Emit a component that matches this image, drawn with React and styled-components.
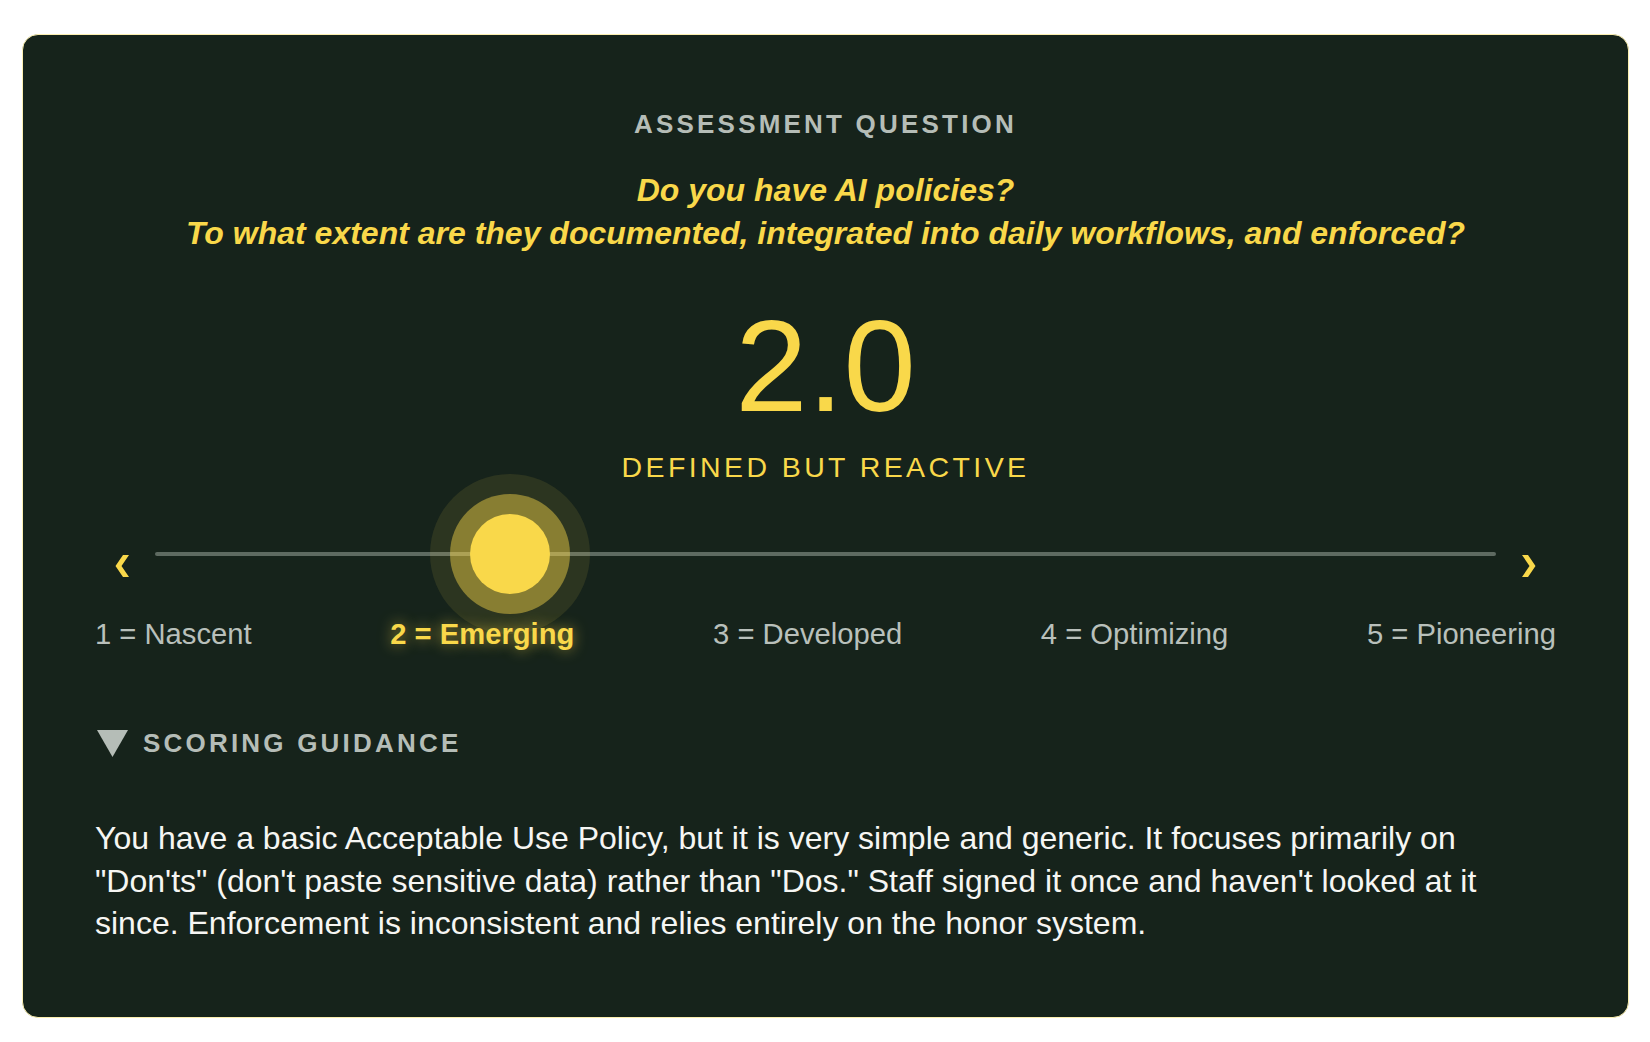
import React, { useState } from 'react';
import styled, { createGlobalStyle } from 'styled-components';

const GlobalStyle = createGlobalStyle`
  html, body {
    margin: 0;
    padding: 0;
    background: #ffffff;
  }
  body {
    font-family: "Liberation Sans", Arial, Helvetica, sans-serif;
  }
`;

const YELLOW = '#f9d84a';

const Page = styled.div`
  padding: 34px 21px 25px 22px;
`;

const Card = styled.section`
  background-color: #16231b;
  border: 1px solid #fbefb0;
  border-radius: 16px;
  padding: 73px 72px 72px 72px;
  display: flex;
  flex-direction: column;
`;

const Eyebrow = styled.h3`
  margin: 0;
  font-size: 26px;
  line-height: 32px;
  font-weight: 700;
  letter-spacing: 3.2px;
  text-transform: uppercase;
  color: #b5bdb7;
  text-align: center;
`;

const Question = styled.p`
  margin: 29px 0 0;
  font-size: 32px;
  line-height: 43px;
  font-weight: 700;
  font-style: italic;
  color: ${YELLOW};
  text-align: center;
`;

const Score = styled.div`
  margin-top: 46px;
  font-size: 130px;
  line-height: 130px;
  color: ${YELLOW};
  text-align: center;
`;

const Level = styled.div`
  margin-top: 19px;
  font-size: 28.5px;
  line-height: 34px;
  letter-spacing: 3.4px;
  text-transform: uppercase;
  color: ${YELLOW};
  text-align: center;
`;

const SliderRow = styled.div`
  margin-top: 30px;
  height: 80px;
  display: flex;
  align-items: center;
  gap: 6px;
`;

const ArrowButton = styled.button`
  width: 54px;
  height: 80px;
  padding: 24px 0 0;
  border: none;
  background: none;
  color: ${YELLOW};
  display: flex;
  align-items: center;
  justify-content: center;
  cursor: pointer;
`;

const Track = styled.div`
  flex: 1;
  position: relative;
  height: 4px;
  border-radius: 2px;
  background-color: #5e6a61;
`;

const Thumb = styled.div`
  position: absolute;
  top: 50%;
  width: 80px;
  height: 80px;
  border-radius: 50%;
  background-color: ${YELLOW};
  transform: translate(-50%, -50%);
  box-shadow:
    0 0 0 20px rgba(249, 216, 74, 0.45),
    0 0 0 40px rgba(249, 216, 74, 0.1);
`;

const Labels = styled.div`
  margin-top: 23px;
  display: flex;
  justify-content: space-between;
`;

const Label = styled.span`
  font-size: 29.2px;
  line-height: 35px;
  font-weight: ${({ $active }) => ($active ? 700 : 400)};
  color: ${({ $active }) => ($active ? YELLOW : '#b9c0bb')};
  text-shadow: ${({ $active }) =>
    $active ? '0 0 14px rgba(249, 216, 74, 0.6)' : 'none'};
  cursor: pointer;
`;

const GuidanceToggle = styled.div`
  margin-top: 75px;
  height: 32px;
  display: flex;
  align-items: center;
  gap: 15px;
  color: #b5bdb7;
  cursor: pointer;

  svg {
    margin-left: 2px;
  }
`;

const GuidanceTitle = styled.span`
  font-size: 26px;
  line-height: 32px;
  font-weight: 700;
  letter-spacing: 3.2px;
  text-transform: uppercase;
`;

const Guidance = styled.p`
  margin: 58px 0 0;
  font-size: 32px;
  line-height: 42.6px;
  color: #f6f6f3;
`;

const levels = [
  { name: 'Nascent', title: 'Ad hoc and informal' },
  { name: 'Emerging', title: 'Defined but reactive' },
  { name: 'Developed', title: 'Documented and practiced' },
  { name: 'Optimizing', title: 'Measured and improving' },
  { name: 'Pioneering', title: 'Embedded and leading' },
];

const guidance =
  'You have a basic Acceptable Use Policy, but it is very simple and generic. It focuses primarily on "Don\'ts" (don\'t paste sensitive data) rather than "Dos." Staff signed it once and haven\'t looked at it since. Enforcement is inconsistent and relies entirely on the honor system.';

const Chevron = ({ dir }) => (
  <svg width="14" height="22" viewBox="0 0 14 22" fill="currentColor">
    {dir === 'left' ? (
      <polygon points="8,0 14,0 6.5,11 14,22 8,22 0.5,11" />
    ) : (
      <polygon points="6,0 0,0 7.5,11 0,22 6,22 13.5,11" />
    )}
  </svg>
);

const App = () => {
  const [value, setValue] = useState(2);
  const [open, setOpen] = useState(true);

  const step = (d) => setValue((v) => Math.min(5, Math.max(1, v + d)));
  const frac = (value - 1) / 4;

  return (
    <Page>
      <GlobalStyle />
      <Card>
        <Eyebrow>Assessment Question</Eyebrow>
        <Question>
          Do you have AI policies?
          <br />
          To what extent are they documented, integrated into daily workflows, and enforced?
        </Question>

        <Score>{value.toFixed(1)}</Score>
        <Level>{levels[value - 1].title}</Level>

        <SliderRow>
          <ArrowButton aria-label="Previous" onClick={() => step(-1)}>
            <Chevron dir="left" />
          </ArrowButton>
          <Track>
            <Thumb style={{ left: `calc(40px + (100% - 80px) * ${frac})` }} />
          </Track>
          <ArrowButton aria-label="Next" onClick={() => step(1)}>
            <Chevron dir="right" />
          </ArrowButton>
        </SliderRow>

        <Labels>
          {levels.map((l, i) => (
            <Label key={l.name} $active={value === i + 1} onClick={() => setValue(i + 1)}>
              {i + 1} = {l.name}
            </Label>
          ))}
        </Labels>

        <GuidanceToggle onClick={() => setOpen(!open)}>
          <svg width="31" height="27" viewBox="0 0 31 27" fill="currentColor">
            {open ? <polygon points="0,0 31,0 15.5,27" /> : <polygon points="0,0 27,15.5 0,31" />}
          </svg>
          <GuidanceTitle>Scoring Guidance</GuidanceTitle>
        </GuidanceToggle>

        {open && <Guidance>{guidance}</Guidance>}
      </Card>
    </Page>
  );
};

export default App;
